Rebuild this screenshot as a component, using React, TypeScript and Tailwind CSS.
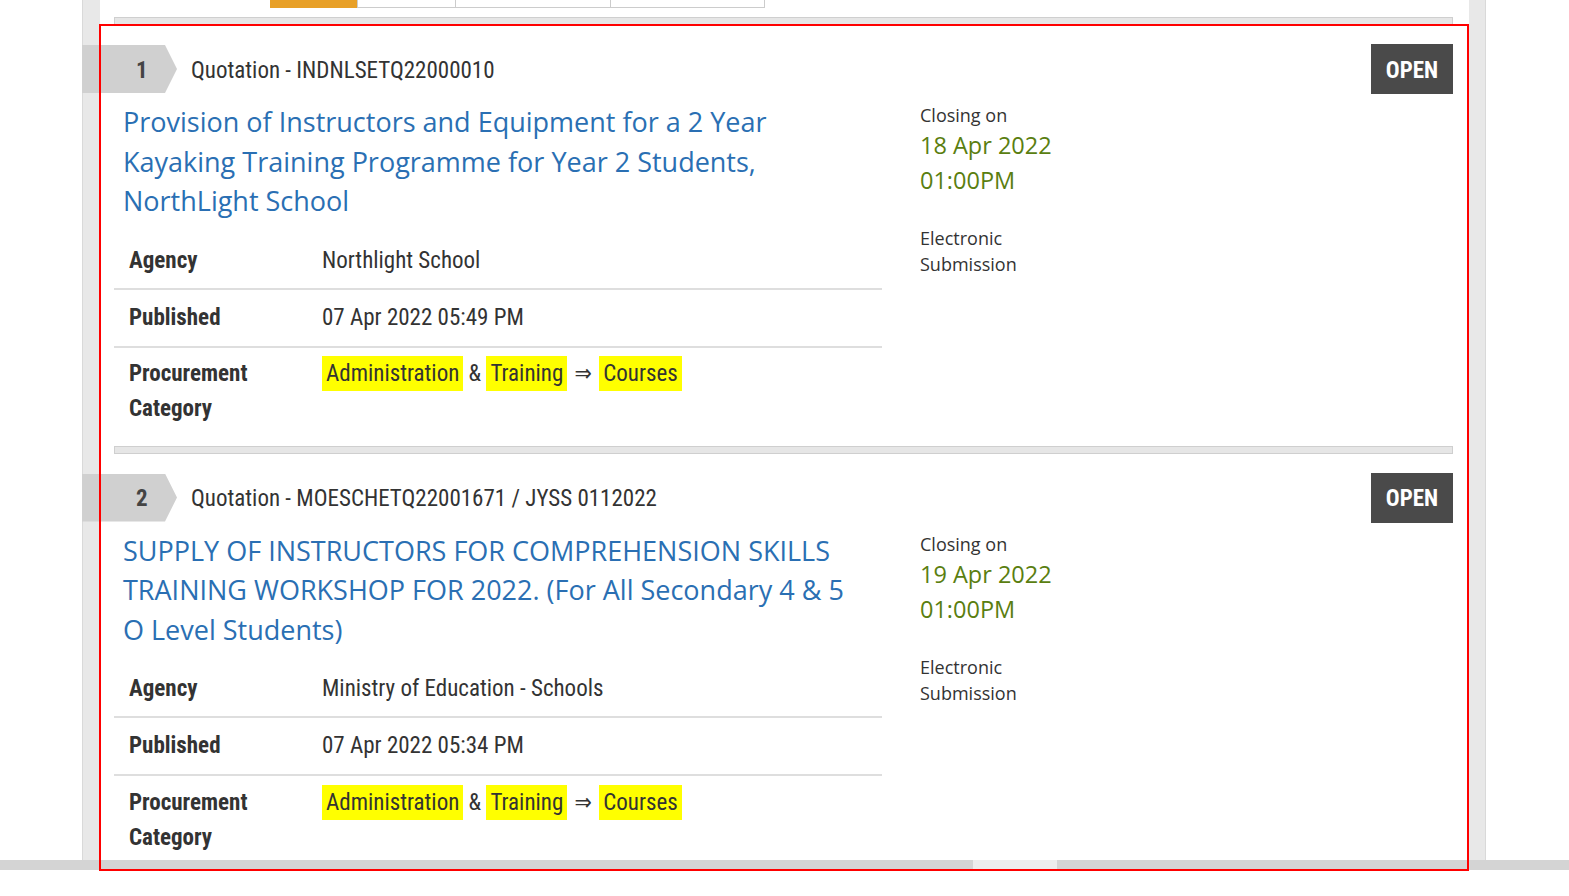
import React from "react";

const cond = "font-['Roboto_Condensed','Liberation_Sans_Narrow','DejaVu_Sans_Condensed',Roboto,sans-serif]";
const open = "font-['Open_Sans','Noto_Sans',sans-serif]";

type Item = {
  n: number;
  ref: string;
  title: string[];
  agency: string;
  published: string;
  date: string;
  time: string;
};

const items: Item[] = [
  {
    n: 1,
    ref: "Quotation - INDNLSETQ22000010",
    title: [
      "Provision of Instructors and Equipment for a 2 Year",
      "Kayaking Training Programme for Year 2 Students,",
      "NorthLight School",
    ],
    agency: "Northlight School",
    published: "07 Apr 2022 05:49 PM",
    date: "18 Apr 2022",
    time: "01:00PM",
  },
  {
    n: 2,
    ref: "Quotation - MOESCHETQ22001671 / JYSS 0112022",
    title: [
      "SUPPLY OF INSTRUCTORS FOR COMPREHENSION SKILLS",
      "TRAINING WORKSHOP FOR 2022. (For All Secondary 4 & 5",
      "O Level Students)",
    ],
    agency: "Ministry of Education - Schools",
    published: "07 Apr 2022 05:34 PM",
    date: "19 Apr 2022",
    time: "01:00PM",
  },
];

function Separator() {
  return <div className="h-[8px] bg-[#e6e6e6] border border-[#cfcfcf]" />;
}

function Hl({ children }: { children: React.ReactNode }) {
  return (
    <span className="inline-block bg-[#ffff00] px-[4px] leading-[35px]">{children}</span>
  );
}

function Entry({ item }: { item: Item }) {
  return (
    <div className="pt-[19px] pb-[9px]">
      <div className="flex items-center h-[50px]">
        <div className="-ml-[32px] w-[95px] h-[48px] bg-[#d0d0d0] [clip-path:polygon(0_0,83px_0,95px_50%,83px_100%,0_100%)] flex items-center">
          <span className={`${cond} pl-[54px] pt-[4px] text-[23px] font-bold text-[#444444]`}>{item.n}</span>
        </div>
        <div className={`${cond} ml-[14px] pt-[4px] text-[23px] text-[#333333]`}>{item.ref}</div>
        <div className="flex-1" />
        <div className={`${cond} w-[82px] h-[50px] pt-[4px] bg-[#4a4a4a] text-white text-[23px] font-bold flex items-center justify-center`}>
          OPEN
        </div>
      </div>
      <div className="flex mt-[8px]">
        <div className="w-[768px]">
          <div className={`${open} pl-[9px] w-[760px] text-[27px] leading-[39.5px] text-[#2a6fb3]`}>
            {item.title.map((l, i) => (
              <div key={i} className="whitespace-nowrap">{l}</div>
            ))}
          </div>
          <div className={`${cond} mt-[12px] text-[23px] leading-[36px] text-[#333333]`}>
            <div className="grid grid-cols-[208px_1fr] pt-[10px] pb-[9px] border-b-2 border-[#dedede]">
              <div className="pl-[15px] font-bold">Agency</div>
              <div>{item.agency}</div>
            </div>
            <div className="grid grid-cols-[208px_1fr] py-[10px] border-b-2 border-[#dedede]">
              <div className="pl-[15px] font-bold">Published</div>
              <div>{item.published}</div>
            </div>
            <div className="grid grid-cols-[208px_1fr] pt-[8.5px] pb-[10.5px] leading-[35px]">
              <div className="pl-[15px] font-bold">
                Procurement
                <br />
                Category
              </div>
              <div>
                <Hl>Administration</Hl> &amp; <Hl>Training</Hl>{" "}
                <span className="inline-block mx-[2px]">⇒</span> <Hl>Courses</Hl>
              </div>
            </div>
          </div>
        </div>
        <div className={`${open} ml-[38px] text-[#333333]`}>
          <div className="text-[18px] leading-[26px]">Closing on</div>
          <div className="text-[23.5px] leading-[35px] text-[#5a7e10]">{item.date}</div>
          <div className="text-[23.5px] leading-[35px] text-[#5a7e10]">{item.time}</div>
          <div className="mt-[27px] text-[18px] leading-[26px]">
            Electronic
            <br />
            Submission
          </div>
        </div>
      </div>
    </div>
  );
}

export default function App() {
  return (
    <div className="relative w-[1569px] h-[896px] bg-white overflow-hidden">
      <div className="h-[860px] overflow-hidden">
        <div className="ml-[82px] w-[1404px] h-full bg-[#e8e8e8] border-x border-[#d9d9d9] pl-[17px] pr-[16px]">
          <div className="h-full bg-white pl-[14px] pr-[16px]">
            <div className="h-[8px] flex ml-[156px]">
              <div className="w-[87px] bg-[#e8a027]" />
              <div className="w-[99px] bg-white border border-t-0 border-[#cccccc]" />
              <div className="w-[155px] bg-white border border-t-0 border-l-0 border-[#cccccc]" />
              <div className="w-[154px] bg-white border border-t-0 border-l-0 border-[#cccccc]" />
            </div>
            <div className="mt-[9px]">
              <Separator />
            </div>
            {items.map((it, i) => (
              <div key={it.n}>
                {i > 0 && <Separator />}
                <Entry item={it} />
              </div>
            ))}
          </div>
        </div>
      </div>
      <div className="h-[10px] bg-[#d4d4d4] flex">
        <div className="ml-[973px] w-[84px] h-full bg-[#ededed]" />
      </div>
      <div className="absolute left-[99px] top-[24px] w-[1370px] h-[847px] border-2 border-[#ff0000] pointer-events-none" />
    </div>
  );
}
